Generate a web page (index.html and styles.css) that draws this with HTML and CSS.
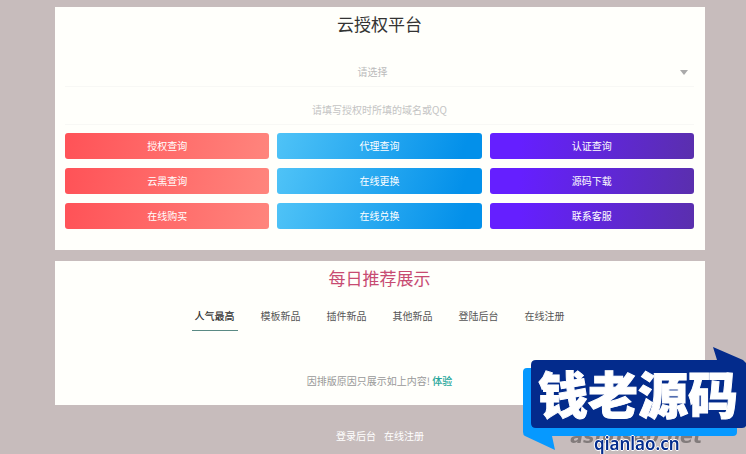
FILE: index.html
```
<!DOCTYPE html>
<html lang="zh-CN">
<head>
  <meta charset="UTF-8">
  <meta name="viewport" content="width=device-width, initial-scale=1.0">
  <title>云授权平台</title>
  <link rel="stylesheet" href="styles.css">
</head>
<body>
  <div class="container">
    <main>
      <section class="card">
        <h1 class="title">云授权平台</h1>
        <form class="query-form">
          <div class="select-wrap">
            <select class="field" aria-label="请选择">
              <option>请选择</option>
            </select>
          </div>
          <input class="field" type="text" aria-label="域名或QQ" placeholder="请填写授权时所填的域名或QQ">
          <div class="buttons">
            <button type="button" class="btn btn-red">授权查询</button>
            <button type="button" class="btn btn-blue">代理查询</button>
            <button type="button" class="btn btn-purple">认证查询</button>
            <button type="button" class="btn btn-red">云黑查询</button>
            <button type="button" class="btn btn-blue">在线更换</button>
            <button type="button" class="btn btn-purple">源码下载</button>
            <button type="button" class="btn btn-red">在线购买</button>
            <button type="button" class="btn btn-blue">在线兑换</button>
            <button type="button" class="btn btn-purple">联系客服</button>
          </div>
        </form>
      </section>

      <section class="card">
        <h2 class="title title-pink">每日推荐展示</h2>
        <nav class="tabs">
          <a href="#" class="tab active">人气最高</a>
          <a href="#" class="tab">模板新品</a>
          <a href="#" class="tab">插件新品</a>
          <a href="#" class="tab">其他新品</a>
          <a href="#" class="tab">登陆后台</a>
          <a href="#" class="tab">在线注册</a>
        </nav>
        <p class="notice">因排版原因只展示如上内容! <a href="#">体验</a></p>
      </section>
    </main>

    <footer class="footer">
      <a href="#">登录后台</a>
      <a href="#">在线注册</a>
    </footer>
  </div>

  <div class="stamp">
    <span class="stamp-site">asnbs40.net</span>
    <svg class="stamp-shape" viewBox="0 0 226 119" aria-hidden="true">
      <path fill="#0699ff" d="M7 33H217V97Q217 101 213 101H32L35 115L5 101Q3 100 3 97V37Q3 33 7 33Z"/>
      <path fill="#032b8c" d="M16 25H197L193 12L223 25L226 28V91Q225 93 222 93H16Q11 93 11 88V30Q11 25 16 25Z"/>
    </svg>
    <span class="stamp-name">钱老源码</span>
    <span class="stamp-url">qianlao.cn</span>
  </div>
</body>
</html>
```

FILE: styles.css
```
* {
  box-sizing: border-box;
}

body {
  margin: 0;
  background-color: #c7bcbc;
  color: #555;
  font-family: "Noto Sans CJK SC", sans-serif;
  font-size: 10px;
  line-height: 16px;
}

a {
  color: inherit;
  text-decoration: none;
}

.container {
  max-width: 1140px;
  margin: 0 auto;
  padding: 7px 41px 0 55px;
}

.card {
  margin-bottom: 11px;
  padding: 3px 11px 16px 10px;
  background-color: #fffffb;
}

.title {
  margin: 0;
  color: #333;
  font-size: 17px;
  font-weight: 400;
  line-height: 28px;
  text-align: center;
}

.title-pink {
  color: #c74b72;
}

.query-form {
  padding: 19px 0 5px;
}

.select-wrap {
  position: relative;
}

/* dropdown arrow */
.select-wrap::after {
  content: "";
  position: absolute;
  top: 13px;
  right: 6px;
  border: 4px solid transparent;
  border-top: 5px solid #aaa;
  border-bottom: 0;
  pointer-events: none;
}

.field {
  display: block;
  width: 100%;
  height: 30px;
  margin-bottom: 8px;
  padding: 0;
  border: 0;
  border-bottom: 1px solid #f8f8f5;
  background: transparent;
  color: #bbb;
  font: inherit;
  text-align: center;
  text-align-last: center;
  appearance: none;
}

select.field {
  padding-right: 14px;
}

.field::placeholder {
  color: #c4c4c4;
}

.buttons {
  display: grid;
  grid-template-columns: repeat(3, 1fr);
  gap: 9px 8px;
}

.btn {
  height: 26px;
  padding: 0;
  border: 0;
  border-radius: 3px;
  color: #fff;
  font: inherit;
  cursor: pointer;
}

.btn-red {
  background: linear-gradient(100deg, #ff5257, #ff857d);
}

.btn-blue {
  background: linear-gradient(110deg, #4fc3f7, #0390ea 90%);
}

.btn-purple {
  background: linear-gradient(100deg, #651fff 15%, #5a2fad);
}

.tabs {
  display: flex;
  justify-content: center;
  gap: 20px;
  padding-top: 13px;
}

.tab {
  padding: 3px 3px 6px;
  border-bottom: 1px solid transparent;
}

.tab.active {
  border-color: #5a8a84;
  color: #333;
  font-weight: 500;
}

.notice {
  margin: 0;
  padding-top: 42px;
  color: #999;
  text-align: center;
}

.notice a {
  color: #26a69a;
  font-weight: 500;
}

.footer {
  display: flex;
  justify-content: center;
  gap: 8px;
  padding: 12px 0 0;
  color: #fff;
}

/* badge over the bottom right corner */
.stamp {
  position: fixed;
  right: 0;
  bottom: 0;
  width: 226px;
  height: 119px;
}

.stamp-shape {
  position: absolute;
  inset: 0;
}

.stamp-site {
  position: absolute;
  right: 44px;
  bottom: 6px;
  color: #827b7b;
  font: italic bold 19px/24px "DejaVu Sans", sans-serif;
}

.stamp-name {
  position: absolute;
  top: 23px;
  left: 18px;
  color: #fff;
  font-size: 50px;
  font-weight: 900;
  line-height: 68px;
  white-space: nowrap;
  -webkit-text-stroke: 1px #fff;
}

.stamp-url {
  position: absolute;
  bottom: 0;
  left: 74px;
  color: #032b8c;
  font: 600 17px/20px "Noto Sans", sans-serif;
  text-shadow: 1px 0 #fff, -1px 0 #fff, 0 1px #fff, 0 -1px #fff;
}
```
